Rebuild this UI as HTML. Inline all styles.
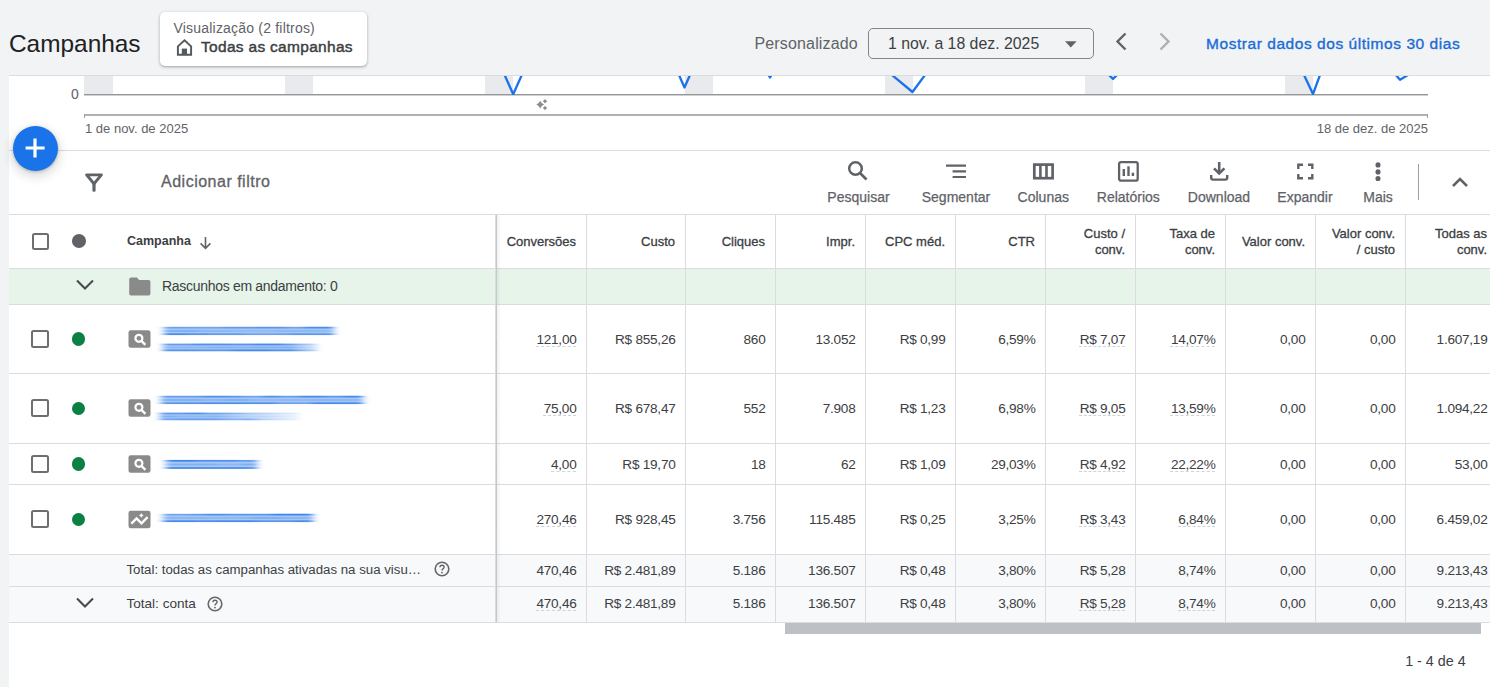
<!DOCTYPE html>
<html><head><meta charset="utf-8"><style>
html,body{margin:0;padding:0}
body{width:1490px;height:687px;overflow:hidden;position:relative;background:#f1f3f4;font-family:"Liberation Sans", sans-serif}
.t{position:absolute;white-space:nowrap;line-height:1}
.b{position:absolute;box-sizing:content-box}
svg.b{overflow:visible}
</style></head><body>
<div class="t" style="left:9.00px;top:31.75px;font-size:24.4px;color:#202124;font-weight:400;">Campanhas</div>
<div class="b" style="left:160px;top:12px;width:207px;height:54px;background:#fff;border-radius:5px;box-shadow:0 1px 2px rgba(60,64,67,.3),0 1px 3px 1px rgba(60,64,67,.12)"></div>
<div class="t" style="left:173.50px;top:20.95px;font-size:14px;color:#5f6368;font-weight:400;letter-spacing:.2px">Visualização (2 filtros)</div>
<svg class="b" style="left:172px;top:36px" width="24" height="24" viewBox="0 0 24 24"><path d="M5.9 10.4 L12.5 4.3 L19.1 10.4 V18.8 H5.9 Z" fill="none" stroke="#55595e" stroke-width="1.95" stroke-linejoin="miter"/><rect x="9.8" y="12.6" width="5.2" height="6.5" fill="#55595e"/></svg>
<div class="t" style="left:201.00px;top:39.28px;font-size:15.5px;color:#3c4043;font-weight:400;letter-spacing:.3px;-webkit-text-stroke:.45px #3c4043">Todas as campanhas</div>
<div class="t" style="left:754.50px;top:35.96px;font-size:16px;color:#5f6368;font-weight:400;letter-spacing:.15px">Personalizado</div>
<div class="b" style="left:868px;top:28px;width:224px;height:29px;border:1px solid #80868b;border-radius:5px"></div>
<div class="t" style="left:888.00px;top:36.08px;font-size:15.85px;color:#3c4043;font-weight:400;">1 nov. a 18 dez. 2025</div>
<svg class="b" style="left:1065px;top:41px" width="12" height="7" viewBox="0 0 12 7"><path d="M0 0.2 H11.6 L5.8 6.5 Z" fill="#5f6368"/></svg>
<svg class="b" style="left:1114px;top:32px" width="14" height="19" viewBox="0 0 14 19"><path d="M11.5 1.5 L3.5 9.5 L11.5 17.5" fill="none" stroke="#5f6368" stroke-width="2.4"/></svg>
<svg class="b" style="left:1158px;top:32px" width="14" height="19" viewBox="0 0 14 19"><path d="M2.5 1.5 L10.5 9.5 L2.5 17.5" fill="none" stroke="#acb0b5" stroke-width="2.4"/></svg>
<div class="t" style="left:1206.00px;top:36.08px;font-size:15.5px;color:#1a6bd6;font-weight:400;letter-spacing:.55px;-webkit-text-stroke:.35px #1a6bd6">Mostrar dados dos últimos 30 dias</div>
<div class="b" style="left:9px;top:75px;width:1481px;height:612px;background:#fff;border-top:1px solid #dadce0"></div>
<div class="b" style="left:84px;top:76px;width:29px;height:18px;background:#e8eaed"></div>
<div class="b" style="left:285px;top:76px;width:28px;height:18px;background:#e8eaed"></div>
<div class="b" style="left:485px;top:76px;width:28px;height:18px;background:#e8eaed"></div>
<div class="b" style="left:685px;top:76px;width:28px;height:18px;background:#e8eaed"></div>
<div class="b" style="left:885px;top:76px;width:28px;height:18px;background:#e8eaed"></div>
<div class="b" style="left:1085px;top:76px;width:28px;height:18px;background:#e8eaed"></div>
<div class="b" style="left:1285px;top:76px;width:28px;height:18px;background:#e8eaed"></div>
<div class="b" style="left:84px;top:94px;width:1344px;height:1px;background:#95979a"></div>
<div class="b" style="left:84px;top:95px;width:1344px;height:1px;background:#cfd0d2"></div>
<div class="t" style="right:1411.20px;top:87.15px;font-size:14px;color:#5f6368;font-weight:400;">0</div>
<div class="b" style="left:84px;top:114px;width:1344px;height:2px;background:#b0b2b4"></div>
<div class="b" style="left:84px;top:114px;width:1px;height:4px;background:#a0a2a5"></div>
<div class="b" style="left:1427px;top:114px;width:1px;height:4px;background:#a0a2a5"></div>
<div class="t" style="left:85.00px;top:122.30px;font-size:13px;color:#5f6368;font-weight:400;">1 de nov. de 2025</div>
<div class="t" style="right:62.00px;top:122.30px;font-size:13px;color:#5f6368;font-weight:400;">18 de dez. de 2025</div>
<svg class="b" style="left:9px;top:75px;clip-path:inset(1px 0 0 0)" width="1481" height="20"><polyline points="495.6,0 504.20000000000005,19.299999999999997 512.8,0" fill="none" stroke="#1a73e8" stroke-width="2.3" stroke-linejoin="round"/><polyline points="670,0 675.5,12.5 681,0" fill="none" stroke="#1a73e8" stroke-width="2.3" stroke-linejoin="round"/><polyline points="759.5,0 761,2.5 762.5,0" fill="none" stroke="#1a73e8" stroke-width="2.3" stroke-linejoin="round"/><polyline points="883,0 903.5,17 916,0" fill="none" stroke="#1a73e8" stroke-width="2.3" stroke-linejoin="round"/><polyline points="1100,0 1104,4 1108,0" fill="none" stroke="#1a73e8" stroke-width="2.3" stroke-linejoin="round"/><polyline points="1295,0 1304,19 1311,0" fill="none" stroke="#1a73e8" stroke-width="2.3" stroke-linejoin="round"/><polyline points="1386.8,0 1391,4.799999999999997 1399,0" fill="none" stroke="#1a73e8" stroke-width="2.3" stroke-linejoin="round"/></svg>
<svg class="b" style="left:530px;top:94px" width="24" height="20" viewBox="0 0 24 20"><path d="M10.2 6.699999999999999 Q11.37 9.43 14.1 10.6 Q11.37 11.77 10.2 14.5 Q9.03 11.77 6.299999999999999 10.6 Q9.03 9.43 10.2 6.699999999999999 Z M15 5.0 Q15.805 6.495 17.3 7.3 Q15.805 8.105 15 9.6 Q14.195 8.105 12.7 7.3 Q14.195 6.495 15 5.0 Z M15 11.7 Q15.805 13.195 17.3 14 Q15.805 14.805 15 16.3 Q14.195 14.805 12.7 14 Q14.195 13.195 15 11.7 Z" fill="#8a8c8f"/></svg>
<div class="b" style="left:9px;top:150px;width:1481px;height:1px;background:#dadce0"></div>
<svg class="b" style="left:84px;top:172px" width="20" height="21" viewBox="0 0 20 21"><path d="M2.6 2.9 H17.4 L10 11.8 Z" fill="none" stroke="#5f6368" stroke-width="2.9" stroke-linejoin="round"/><rect x="8.4" y="10.5" width="3.2" height="9.3" rx="1.4" fill="#5f6368"/></svg>
<div class="t" style="left:161.00px;top:173.76px;font-size:16px;color:#5f6368;font-weight:400;letter-spacing:.5px;-webkit-text-stroke:.3px #5f6368">Adicionar filtro</div>
<div class="t" style="left:658.50px;width:400px;text-align:center;top:189.85px;font-size:14px;color:#5f6368;font-weight:400;-webkit-text-stroke:.25px #5f6368">Pesquisar</div>
<div class="t" style="left:756.00px;width:400px;text-align:center;top:189.85px;font-size:14px;color:#5f6368;font-weight:400;-webkit-text-stroke:.25px #5f6368">Segmentar</div>
<div class="t" style="left:843.30px;width:400px;text-align:center;top:189.85px;font-size:14px;color:#5f6368;font-weight:400;-webkit-text-stroke:.25px #5f6368">Colunas</div>
<div class="t" style="left:928.30px;width:400px;text-align:center;top:189.85px;font-size:14px;color:#5f6368;font-weight:400;-webkit-text-stroke:.25px #5f6368">Relatórios</div>
<div class="t" style="left:1019.00px;width:400px;text-align:center;top:189.85px;font-size:14px;color:#5f6368;font-weight:400;-webkit-text-stroke:.25px #5f6368">Download</div>
<div class="t" style="left:1105.00px;width:400px;text-align:center;top:189.85px;font-size:14px;color:#5f6368;font-weight:400;-webkit-text-stroke:.25px #5f6368">Expandir</div>
<div class="t" style="left:1178.00px;width:400px;text-align:center;top:189.85px;font-size:14px;color:#5f6368;font-weight:400;-webkit-text-stroke:.25px #5f6368">Mais</div>
<svg class="b" style="left:845px;top:158px" width="25" height="25" viewBox="0 0 25 25"><circle cx="10.5" cy="10.5" r="6.3" fill="none" stroke="#5f6368" stroke-width="2.5"/><path d="M15 15 L21.5 21.5" stroke="#5f6368" stroke-width="2.6"/></svg>
<svg class="b" style="left:944px;top:163px" width="24" height="16" viewBox="0 0 24 16"><path d="M2 2.7 H22 M8.6 8.4 H22 M8.6 14 H22" stroke="#5f6368" stroke-width="2.2"/></svg>
<svg class="b" style="left:1031px;top:161px" width="25" height="21" viewBox="0 0 25 21"><rect x="3.3" y="3.6" width="18.3" height="13.6" fill="none" stroke="#5f6368" stroke-width="2.7"/><path d="M9.4 3 V17.6 M15.5 3 V17.6" stroke="#5f6368" stroke-width="2.6"/></svg>
<svg class="b" style="left:1116px;top:159px" width="25" height="25" viewBox="0 0 25 25"><rect x="3.1" y="3.1" width="18.6" height="18.6" rx="2" fill="none" stroke="#5f6368" stroke-width="2.3"/><rect x="6.6" y="10" width="2.4" height="7" fill="#5f6368"/><rect x="11.3" y="7.3" width="2.4" height="9.7" fill="#5f6368"/><rect x="15.7" y="13.7" width="2.4" height="3.3" fill="#5f6368"/></svg>
<svg class="b" style="left:1207px;top:159px" width="25" height="25" viewBox="0 0 25 25"><path d="M12.2 3 V14" stroke="#5f6368" stroke-width="2.6"/><path d="M7 9.3 L12.2 14.5 L17.4 9.3" fill="none" stroke="#5f6368" stroke-width="2.6"/><path d="M4.2 16 V18.8 Q4.2 20.6 6 20.6 H18.4 Q20.2 20.6 20.2 18.8 V16" fill="none" stroke="#5f6368" stroke-width="2.4"/></svg>
<svg class="b" style="left:1295px;top:161px" width="21" height="21" viewBox="0 0 21 21"><path d="M3.3 8 V3.8 H8 M13 3.8 H17.3 V8 M17.3 13 V17.3 H13 M8 17.3 H3.3 V13" fill="none" stroke="#5f6368" stroke-width="2.4"/></svg>
<svg class="b" style="left:1372px;top:160px" width="12" height="24" viewBox="0 0 12 24"><circle cx="6" cy="4.9" r="2.55" fill="#5f6368"/><circle cx="6" cy="11.9" r="2.55" fill="#5f6368"/><circle cx="6" cy="18.5" r="2.55" fill="#5f6368"/></svg>
<div class="b" style="left:1418px;top:164px;width:1px;height:36px;background:#9aa0a6"></div>
<svg class="b" style="left:1450px;top:176px" width="20" height="14" viewBox="0 0 20 14"><path d="M3 10 L10 3 L17 10" fill="none" stroke="#5f6368" stroke-width="2.5"/></svg>
<div class="b" style="left:9px;top:214px;width:1481px;height:1px;background:#dadce0"></div>
<div class="b" style="left:9px;top:269px;width:1481px;height:35px;background:#e6f4ea"></div>
<div class="b" style="left:9px;top:555px;width:1481px;height:67px;background:#f8f9fa"></div>
<div class="b" style="left:9px;top:268px;width:1481px;height:1px;background:#dadce0"></div>
<div class="b" style="left:9px;top:304px;width:1481px;height:1px;background:#dadce0"></div>
<div class="b" style="left:9px;top:373px;width:1481px;height:1px;background:#dadce0"></div>
<div class="b" style="left:9px;top:443px;width:1481px;height:1px;background:#dadce0"></div>
<div class="b" style="left:9px;top:484px;width:1481px;height:1px;background:#dadce0"></div>
<div class="b" style="left:9px;top:554px;width:1481px;height:1px;background:#dadce0"></div>
<div class="b" style="left:9px;top:586px;width:1481px;height:1px;background:#dadce0"></div>
<div class="b" style="left:9px;top:622px;width:1481px;height:1px;background:#dadce0"></div>
<div class="b" style="left:586px;top:215px;width:1px;height:407px;background:#dadce0"></div>
<div class="b" style="left:685px;top:215px;width:1px;height:407px;background:#dadce0"></div>
<div class="b" style="left:775px;top:215px;width:1px;height:407px;background:#dadce0"></div>
<div class="b" style="left:865px;top:215px;width:1px;height:407px;background:#dadce0"></div>
<div class="b" style="left:955px;top:215px;width:1px;height:407px;background:#dadce0"></div>
<div class="b" style="left:1045px;top:215px;width:1px;height:407px;background:#dadce0"></div>
<div class="b" style="left:1135px;top:215px;width:1px;height:407px;background:#dadce0"></div>
<div class="b" style="left:1225px;top:215px;width:1px;height:407px;background:#dadce0"></div>
<div class="b" style="left:1315px;top:215px;width:1px;height:407px;background:#dadce0"></div>
<div class="b" style="left:1405px;top:215px;width:1px;height:407px;background:#dadce0"></div>
<div class="b" style="left:495px;top:215px;width:1px;height:407px;background:#dadce0"></div>
<div class="b" style="left:496px;top:215px;width:1px;height:407px;background:#c4c7cb"></div>
<div class="b" style="left:495.5px;top:340.5px;width:1px;height:8px;background:#c9bfc3"></div>
<div class="b" style="left:495.5px;top:410px;width:1px;height:8px;background:#c9bfc3"></div>
<div class="b" style="left:495.5px;top:461.5px;width:1px;height:8px;background:#c9bfc3"></div>
<div class="b" style="left:495.5px;top:519px;width:1px;height:8px;background:#c9bfc3"></div>
<div class="b" style="left:497px;top:215px;width:4px;height:407px;background:linear-gradient(90deg,rgba(60,64,67,.07),rgba(60,64,67,0))"></div>
<div class="t" style="right:914.00px;top:235.00px;font-size:13px;color:#3c4043;font-weight:400;-webkit-text-stroke:.3px #3c4043">Conversões</div>
<div class="t" style="right:815.00px;top:235.00px;font-size:13px;color:#3c4043;font-weight:400;-webkit-text-stroke:.3px #3c4043">Custo</div>
<div class="t" style="right:725.00px;top:235.00px;font-size:13px;color:#3c4043;font-weight:400;-webkit-text-stroke:.3px #3c4043">Cliques</div>
<div class="t" style="right:635.00px;top:235.00px;font-size:13px;color:#3c4043;font-weight:400;-webkit-text-stroke:.3px #3c4043">Impr.</div>
<div class="t" style="right:545.00px;top:235.00px;font-size:13px;color:#3c4043;font-weight:400;-webkit-text-stroke:.3px #3c4043">CPC méd.</div>
<div class="t" style="right:455.00px;top:235.00px;font-size:13px;color:#3c4043;font-weight:400;-webkit-text-stroke:.3px #3c4043">CTR</div>
<div class="t" style="right:365.00px;top:227.20px;font-size:13px;color:#3c4043;font-weight:400;-webkit-text-stroke:.3px #3c4043">Custo /</div>
<div class="t" style="right:365.00px;top:242.80px;font-size:13px;color:#3c4043;font-weight:400;-webkit-text-stroke:.3px #3c4043">conv.</div>
<div class="t" style="right:275.00px;top:227.20px;font-size:13px;color:#3c4043;font-weight:400;-webkit-text-stroke:.3px #3c4043">Taxa de</div>
<div class="t" style="right:275.00px;top:242.80px;font-size:13px;color:#3c4043;font-weight:400;-webkit-text-stroke:.3px #3c4043">conv.</div>
<div class="t" style="right:185.00px;top:235.00px;font-size:13px;color:#3c4043;font-weight:400;-webkit-text-stroke:.3px #3c4043">Valor conv.</div>
<div class="t" style="right:95.00px;top:227.20px;font-size:13px;color:#3c4043;font-weight:400;-webkit-text-stroke:.3px #3c4043">Valor conv.</div>
<div class="t" style="right:95.00px;top:242.80px;font-size:13px;color:#3c4043;font-weight:400;-webkit-text-stroke:.3px #3c4043">/ custo</div>
<div class="t" style="right:3.00px;top:227.20px;font-size:13px;color:#3c4043;font-weight:400;-webkit-text-stroke:.3px #3c4043">Todas as</div>
<div class="t" style="right:3.00px;top:242.80px;font-size:13px;color:#3c4043;font-weight:400;-webkit-text-stroke:.3px #3c4043">conv.</div>
<div class="b" style="left:32px;top:233px;width:13px;height:13px;border:2px solid #6d6e70;border-radius:2.5px"></div>
<div class="b" style="left:72px;top:234.3px;width:14px;height:13.4px;background:#5f6368;border-radius:50%"></div>
<div class="t" style="left:127.00px;top:235.42px;font-size:12.5px;color:#3c4043;font-weight:700;">Campanha</div>
<svg class="b" style="left:198px;top:236px" width="15" height="14" viewBox="0 0 15 14"><path d="M7.5 1 V12.2 M2.6 7.4 L7.5 12.3 L12.4 7.4" fill="none" stroke="#5f6368" stroke-width="1.6"/></svg>
<svg class="b" style="left:74px;top:277px" width="22" height="16" viewBox="0 0 22 16"><path d="M3 3.5 L11 11.5 L19 3.5" fill="none" stroke="#474b50" stroke-width="2.1"/></svg>
<svg class="b" style="left:128px;top:277px" width="23" height="19" viewBox="0 0 23 19"><path d="M1.2 2.6 Q1.2 0.6 3 0.6 H9 L11 3 H20.6 Q22.4 3 22.4 4.8 V16.8 Q22.4 18.6 20.6 18.6 H3 Q1.2 18.6 1.2 16.8 Z" fill="#8a8a8a"/></svg>
<div class="t" style="left:162.00px;top:279.35px;font-size:14px;color:#3c4043;font-weight:400;letter-spacing:-.3px">Rascunhos em andamento: 0</div>
<div class="t" style="right:913.50px;top:333.09px;font-size:13.6px;color:#3c4043;font-weight:400;letter-spacing:-.25px;text-decoration:underline dashed #d0d3d7;text-decoration-thickness:1px;text-underline-offset:1.8px">121,00</div>
<div class="t" style="right:814.50px;top:333.09px;font-size:13.6px;color:#3c4043;font-weight:400;letter-spacing:-.25px;">R$ 855,26</div>
<div class="t" style="right:724.50px;top:333.09px;font-size:13.6px;color:#3c4043;font-weight:400;letter-spacing:-.25px;">860</div>
<div class="t" style="right:634.50px;top:333.09px;font-size:13.6px;color:#3c4043;font-weight:400;letter-spacing:-.25px;">13.052</div>
<div class="t" style="right:544.50px;top:333.09px;font-size:13.6px;color:#3c4043;font-weight:400;letter-spacing:-.25px;">R$ 0,99</div>
<div class="t" style="right:454.50px;top:333.09px;font-size:13.6px;color:#3c4043;font-weight:400;letter-spacing:-.25px;">6,59%</div>
<div class="t" style="right:364.50px;top:333.09px;font-size:13.6px;color:#3c4043;font-weight:400;letter-spacing:-.25px;text-decoration:underline dashed #d0d3d7;text-decoration-thickness:1px;text-underline-offset:1.8px">R$ 7,07</div>
<div class="t" style="right:274.50px;top:333.09px;font-size:13.6px;color:#3c4043;font-weight:400;letter-spacing:-.25px;text-decoration:underline dashed #d0d3d7;text-decoration-thickness:1px;text-underline-offset:1.8px">14,07%</div>
<div class="t" style="right:184.50px;top:333.09px;font-size:13.6px;color:#3c4043;font-weight:400;letter-spacing:-.25px;">0,00</div>
<div class="t" style="right:94.50px;top:333.09px;font-size:13.6px;color:#3c4043;font-weight:400;letter-spacing:-.25px;">0,00</div>
<div class="t" style="right:2.50px;top:333.09px;font-size:13.6px;color:#3c4043;font-weight:400;letter-spacing:-.25px;">1.607,19</div>
<div class="t" style="right:913.50px;top:402.39px;font-size:13.6px;color:#3c4043;font-weight:400;letter-spacing:-.25px;text-decoration:underline dashed #d0d3d7;text-decoration-thickness:1px;text-underline-offset:1.8px">75,00</div>
<div class="t" style="right:814.50px;top:402.39px;font-size:13.6px;color:#3c4043;font-weight:400;letter-spacing:-.25px;">R$ 678,47</div>
<div class="t" style="right:724.50px;top:402.39px;font-size:13.6px;color:#3c4043;font-weight:400;letter-spacing:-.25px;">552</div>
<div class="t" style="right:634.50px;top:402.39px;font-size:13.6px;color:#3c4043;font-weight:400;letter-spacing:-.25px;">7.908</div>
<div class="t" style="right:544.50px;top:402.39px;font-size:13.6px;color:#3c4043;font-weight:400;letter-spacing:-.25px;">R$ 1,23</div>
<div class="t" style="right:454.50px;top:402.39px;font-size:13.6px;color:#3c4043;font-weight:400;letter-spacing:-.25px;">6,98%</div>
<div class="t" style="right:364.50px;top:402.39px;font-size:13.6px;color:#3c4043;font-weight:400;letter-spacing:-.25px;text-decoration:underline dashed #d0d3d7;text-decoration-thickness:1px;text-underline-offset:1.8px">R$ 9,05</div>
<div class="t" style="right:274.50px;top:402.39px;font-size:13.6px;color:#3c4043;font-weight:400;letter-spacing:-.25px;text-decoration:underline dashed #d0d3d7;text-decoration-thickness:1px;text-underline-offset:1.8px">13,59%</div>
<div class="t" style="right:184.50px;top:402.39px;font-size:13.6px;color:#3c4043;font-weight:400;letter-spacing:-.25px;">0,00</div>
<div class="t" style="right:94.50px;top:402.39px;font-size:13.6px;color:#3c4043;font-weight:400;letter-spacing:-.25px;">0,00</div>
<div class="t" style="right:2.50px;top:402.39px;font-size:13.6px;color:#3c4043;font-weight:400;letter-spacing:-.25px;">1.094,22</div>
<div class="t" style="right:913.50px;top:458.19px;font-size:13.6px;color:#3c4043;font-weight:400;letter-spacing:-.25px;text-decoration:underline dashed #d0d3d7;text-decoration-thickness:1px;text-underline-offset:1.8px">4,00</div>
<div class="t" style="right:814.50px;top:458.19px;font-size:13.6px;color:#3c4043;font-weight:400;letter-spacing:-.25px;">R$ 19,70</div>
<div class="t" style="right:724.50px;top:458.19px;font-size:13.6px;color:#3c4043;font-weight:400;letter-spacing:-.25px;">18</div>
<div class="t" style="right:634.50px;top:458.19px;font-size:13.6px;color:#3c4043;font-weight:400;letter-spacing:-.25px;">62</div>
<div class="t" style="right:544.50px;top:458.19px;font-size:13.6px;color:#3c4043;font-weight:400;letter-spacing:-.25px;">R$ 1,09</div>
<div class="t" style="right:454.50px;top:458.19px;font-size:13.6px;color:#3c4043;font-weight:400;letter-spacing:-.25px;">29,03%</div>
<div class="t" style="right:364.50px;top:458.19px;font-size:13.6px;color:#3c4043;font-weight:400;letter-spacing:-.25px;text-decoration:underline dashed #d0d3d7;text-decoration-thickness:1px;text-underline-offset:1.8px">R$ 4,92</div>
<div class="t" style="right:274.50px;top:458.19px;font-size:13.6px;color:#3c4043;font-weight:400;letter-spacing:-.25px;text-decoration:underline dashed #d0d3d7;text-decoration-thickness:1px;text-underline-offset:1.8px">22,22%</div>
<div class="t" style="right:184.50px;top:458.19px;font-size:13.6px;color:#3c4043;font-weight:400;letter-spacing:-.25px;">0,00</div>
<div class="t" style="right:94.50px;top:458.19px;font-size:13.6px;color:#3c4043;font-weight:400;letter-spacing:-.25px;">0,00</div>
<div class="t" style="right:2.50px;top:458.19px;font-size:13.6px;color:#3c4043;font-weight:400;letter-spacing:-.25px;">53,00</div>
<div class="t" style="right:913.50px;top:513.39px;font-size:13.6px;color:#3c4043;font-weight:400;letter-spacing:-.25px;text-decoration:underline dashed #d0d3d7;text-decoration-thickness:1px;text-underline-offset:1.8px">270,46</div>
<div class="t" style="right:814.50px;top:513.39px;font-size:13.6px;color:#3c4043;font-weight:400;letter-spacing:-.25px;">R$ 928,45</div>
<div class="t" style="right:724.50px;top:513.39px;font-size:13.6px;color:#3c4043;font-weight:400;letter-spacing:-.25px;">3.756</div>
<div class="t" style="right:634.50px;top:513.39px;font-size:13.6px;color:#3c4043;font-weight:400;letter-spacing:-.25px;">115.485</div>
<div class="t" style="right:544.50px;top:513.39px;font-size:13.6px;color:#3c4043;font-weight:400;letter-spacing:-.25px;">R$ 0,25</div>
<div class="t" style="right:454.50px;top:513.39px;font-size:13.6px;color:#3c4043;font-weight:400;letter-spacing:-.25px;">3,25%</div>
<div class="t" style="right:364.50px;top:513.39px;font-size:13.6px;color:#3c4043;font-weight:400;letter-spacing:-.25px;text-decoration:underline dashed #d0d3d7;text-decoration-thickness:1px;text-underline-offset:1.8px">R$ 3,43</div>
<div class="t" style="right:274.50px;top:513.39px;font-size:13.6px;color:#3c4043;font-weight:400;letter-spacing:-.25px;text-decoration:underline dashed #d0d3d7;text-decoration-thickness:1px;text-underline-offset:1.8px">6,84%</div>
<div class="t" style="right:184.50px;top:513.39px;font-size:13.6px;color:#3c4043;font-weight:400;letter-spacing:-.25px;">0,00</div>
<div class="t" style="right:94.50px;top:513.39px;font-size:13.6px;color:#3c4043;font-weight:400;letter-spacing:-.25px;">0,00</div>
<div class="t" style="right:2.50px;top:513.39px;font-size:13.6px;color:#3c4043;font-weight:400;letter-spacing:-.25px;">6.459,02</div>
<div class="t" style="right:913.50px;top:563.59px;font-size:13.6px;color:#3c4043;font-weight:400;letter-spacing:-.25px;">470,46</div>
<div class="t" style="right:814.50px;top:563.59px;font-size:13.6px;color:#3c4043;font-weight:400;letter-spacing:-.25px;">R$ 2.481,89</div>
<div class="t" style="right:724.50px;top:563.59px;font-size:13.6px;color:#3c4043;font-weight:400;letter-spacing:-.25px;">5.186</div>
<div class="t" style="right:634.50px;top:563.59px;font-size:13.6px;color:#3c4043;font-weight:400;letter-spacing:-.25px;">136.507</div>
<div class="t" style="right:544.50px;top:563.59px;font-size:13.6px;color:#3c4043;font-weight:400;letter-spacing:-.25px;">R$ 0,48</div>
<div class="t" style="right:454.50px;top:563.59px;font-size:13.6px;color:#3c4043;font-weight:400;letter-spacing:-.25px;">3,80%</div>
<div class="t" style="right:364.50px;top:563.59px;font-size:13.6px;color:#3c4043;font-weight:400;letter-spacing:-.25px;">R$ 5,28</div>
<div class="t" style="right:274.50px;top:563.59px;font-size:13.6px;color:#3c4043;font-weight:400;letter-spacing:-.25px;">8,74%</div>
<div class="t" style="right:184.50px;top:563.59px;font-size:13.6px;color:#3c4043;font-weight:400;letter-spacing:-.25px;">0,00</div>
<div class="t" style="right:94.50px;top:563.59px;font-size:13.6px;color:#3c4043;font-weight:400;letter-spacing:-.25px;">0,00</div>
<div class="t" style="right:2.50px;top:563.59px;font-size:13.6px;color:#3c4043;font-weight:400;letter-spacing:-.25px;">9.213,43</div>
<div class="t" style="right:913.50px;top:597.39px;font-size:13.6px;color:#3c4043;font-weight:400;letter-spacing:-.25px;text-decoration:underline dashed #d0d3d7;text-decoration-thickness:1px;text-underline-offset:1.8px">470,46</div>
<div class="t" style="right:814.50px;top:597.39px;font-size:13.6px;color:#3c4043;font-weight:400;letter-spacing:-.25px;">R$ 2.481,89</div>
<div class="t" style="right:724.50px;top:597.39px;font-size:13.6px;color:#3c4043;font-weight:400;letter-spacing:-.25px;">5.186</div>
<div class="t" style="right:634.50px;top:597.39px;font-size:13.6px;color:#3c4043;font-weight:400;letter-spacing:-.25px;">136.507</div>
<div class="t" style="right:544.50px;top:597.39px;font-size:13.6px;color:#3c4043;font-weight:400;letter-spacing:-.25px;">R$ 0,48</div>
<div class="t" style="right:454.50px;top:597.39px;font-size:13.6px;color:#3c4043;font-weight:400;letter-spacing:-.25px;">3,80%</div>
<div class="t" style="right:364.50px;top:597.39px;font-size:13.6px;color:#3c4043;font-weight:400;letter-spacing:-.25px;text-decoration:underline dashed #d0d3d7;text-decoration-thickness:1px;text-underline-offset:1.8px">R$ 5,28</div>
<div class="t" style="right:274.50px;top:597.39px;font-size:13.6px;color:#3c4043;font-weight:400;letter-spacing:-.25px;text-decoration:underline dashed #d0d3d7;text-decoration-thickness:1px;text-underline-offset:1.8px">8,74%</div>
<div class="t" style="right:184.50px;top:597.39px;font-size:13.6px;color:#3c4043;font-weight:400;letter-spacing:-.25px;">0,00</div>
<div class="t" style="right:94.50px;top:597.39px;font-size:13.6px;color:#3c4043;font-weight:400;letter-spacing:-.25px;">0,00</div>
<div class="t" style="right:2.50px;top:597.39px;font-size:13.6px;color:#3c4043;font-weight:400;letter-spacing:-.25px;">9.213,43</div>
<div class="b" style="left:31px;top:329.5px;width:14px;height:14px;border:2px solid #6d6e70;border-radius:2.5px"></div>
<div class="b" style="left:71.8px;top:332.2px;width:13.4px;height:13.6px;background:#0b8043;border-radius:50%"></div>
<svg class="b" style="left:128px;top:329.5px" width="23" height="18" viewBox="0 0 23 18"><rect x="0.5" y="0.2" width="22" height="17.5" rx="2.2" fill="#8a8a8a"/><circle cx="10.9" cy="8.3" r="3.5" fill="none" stroke="#fff" stroke-width="2.2"/><path d="M13.4 10.8 L17.4 14.8" stroke="#fff" stroke-width="2.4"/></svg>
<div class="b" style="left:31px;top:399.0px;width:14px;height:14px;border:2px solid #6d6e70;border-radius:2.5px"></div>
<div class="b" style="left:71.8px;top:401.7px;width:13.4px;height:13.6px;background:#0b8043;border-radius:50%"></div>
<svg class="b" style="left:128px;top:399px" width="23" height="18" viewBox="0 0 23 18"><rect x="0.5" y="0.2" width="22" height="17.5" rx="2.2" fill="#8a8a8a"/><circle cx="10.9" cy="8.3" r="3.5" fill="none" stroke="#fff" stroke-width="2.2"/><path d="M13.4 10.8 L17.4 14.8" stroke="#fff" stroke-width="2.4"/></svg>
<div class="b" style="left:31px;top:454.5px;width:14px;height:14px;border:2px solid #6d6e70;border-radius:2.5px"></div>
<div class="b" style="left:71.8px;top:457.2px;width:13.4px;height:13.6px;background:#0b8043;border-radius:50%"></div>
<svg class="b" style="left:128px;top:454.5px" width="23" height="18" viewBox="0 0 23 18"><rect x="0.5" y="0.2" width="22" height="17.5" rx="2.2" fill="#8a8a8a"/><circle cx="10.9" cy="8.3" r="3.5" fill="none" stroke="#fff" stroke-width="2.2"/><path d="M13.4 10.8 L17.4 14.8" stroke="#fff" stroke-width="2.4"/></svg>
<div class="b" style="left:31px;top:510.0px;width:14px;height:14px;border:2px solid #6d6e70;border-radius:2.5px"></div>
<div class="b" style="left:71.8px;top:512.7px;width:13.4px;height:13.6px;background:#0b8043;border-radius:50%"></div>
<svg class="b" style="left:128px;top:510px" width="23" height="18" viewBox="0 0 23 18"><rect x="0.5" y="0.7" width="22" height="17.5" rx="2.2" fill="#8a8a8a"/><path d="M3.3 13.7 L8.6 8.5 L13.5 13.3 L19.6 7.2" fill="none" stroke="#fff" stroke-width="2.4"/><path d="M13.3 2.9 L14.1 4.6 L15.8 5.4 L14.1 6.2 L13.3 7.9 L12.5 6.2 L10.8 5.4 L12.5 4.6 Z" fill="#fff"/></svg>
<svg class="b" style="left:152px;top:322px" width="194" height="18" viewBox="0 0 194 18"><defs><filter id="bl164326" x="-20%" y="-50%" width="140%" height="200%"><feGaussianBlur stdDeviation="3.5 0.7"/></filter></defs><g filter="url(#bl164326)"><rect x="12" y="5.0" width="170" height="8.0" fill="#9dc0f4" opacity=".9"/><rect x="12.0" y="4.7" width="24.7" height="1.8" fill="#1a73e8" opacity="0.43"/><rect x="36.7" y="4.7" width="34.5" height="1.8" fill="#1a73e8" opacity="0.40"/><rect x="71.2" y="4.7" width="31.1" height="1.8" fill="#1a73e8" opacity="0.51"/><rect x="102.3" y="4.7" width="16.7" height="1.8" fill="#1a73e8" opacity="0.57"/><rect x="119.1" y="4.7" width="16.1" height="1.8" fill="#1a73e8" opacity="0.54"/><rect x="135.2" y="4.7" width="17.1" height="1.8" fill="#1a73e8" opacity="0.41"/><rect x="152.3" y="4.7" width="27.7" height="1.8" fill="#1a73e8" opacity="0.69"/><rect x="180.0" y="4.7" width="2.0" height="1.8" fill="#1a73e8" opacity="0.46"/><rect x="12.0" y="8.1" width="33.8" height="1.8" fill="#1a73e8" opacity="0.29"/><rect x="45.8" y="8.1" width="32.3" height="1.8" fill="#1a73e8" opacity="0.21"/><rect x="78.1" y="8.1" width="44.3" height="1.8" fill="#1a73e8" opacity="0.16"/><rect x="122.4" y="8.1" width="40.8" height="1.8" fill="#1a73e8" opacity="0.19"/><rect x="163.2" y="8.1" width="18.8" height="1.8" fill="#1a73e8" opacity="0.17"/><rect x="12.0" y="11.3" width="24.3" height="1.8" fill="#1a73e8" opacity="0.68"/><rect x="36.3" y="11.3" width="20.4" height="1.8" fill="#1a73e8" opacity="0.59"/><rect x="56.7" y="11.3" width="34.2" height="1.8" fill="#1a73e8" opacity="0.51"/><rect x="90.8" y="11.3" width="31.4" height="1.8" fill="#1a73e8" opacity="0.40"/><rect x="122.3" y="11.3" width="16.8" height="1.8" fill="#1a73e8" opacity="0.45"/><rect x="139.1" y="11.3" width="35.4" height="1.8" fill="#1a73e8" opacity="0.54"/><rect x="174.5" y="11.3" width="7.5" height="1.8" fill="#1a73e8" opacity="0.59"/></g></svg>
<svg class="b" style="left:151px;top:339px" width="179" height="17" viewBox="0 0 179 17"><defs><filter id="bl163343" x="-20%" y="-50%" width="140%" height="200%"><feGaussianBlur stdDeviation="3.5 0.7"/></filter><linearGradient id="gbl163343" x1="0" x2="179" gradientUnits="userSpaceOnUse"><stop offset="0.777" stop-color="#fff"/><stop offset="1" stop-color="#000"/></linearGradient><mask id="mbl163343"><rect width="179" height="17" fill="url(#gbl163343)"/></mask></defs><g filter="url(#bl163343)" mask="url(#mbl163343)"><rect x="12" y="4.9" width="155" height="7.2" fill="#9dc0f4" opacity=".9"/><rect x="12.0" y="4.5" width="28.6" height="1.8" fill="#1a73e8" opacity="0.49"/><rect x="40.6" y="4.5" width="38.8" height="1.8" fill="#1a73e8" opacity="0.64"/><rect x="79.4" y="4.5" width="22.3" height="1.8" fill="#1a73e8" opacity="0.59"/><rect x="101.7" y="4.5" width="30.8" height="1.8" fill="#1a73e8" opacity="0.70"/><rect x="132.5" y="4.5" width="34.5" height="1.8" fill="#1a73e8" opacity="0.48"/><rect x="12.0" y="7.6" width="44.4" height="1.8" fill="#1a73e8" opacity="0.17"/><rect x="56.4" y="7.6" width="27.5" height="1.8" fill="#1a73e8" opacity="0.26"/><rect x="83.9" y="7.6" width="19.6" height="1.8" fill="#1a73e8" opacity="0.22"/><rect x="103.5" y="7.6" width="16.2" height="1.8" fill="#1a73e8" opacity="0.25"/><rect x="119.7" y="7.6" width="37.9" height="1.8" fill="#1a73e8" opacity="0.24"/><rect x="157.6" y="7.6" width="9.4" height="1.8" fill="#1a73e8" opacity="0.20"/><rect x="12.0" y="10.5" width="35.9" height="1.8" fill="#1a73e8" opacity="0.60"/><rect x="47.9" y="10.5" width="32.4" height="1.8" fill="#1a73e8" opacity="0.55"/><rect x="80.3" y="10.5" width="40.2" height="1.8" fill="#1a73e8" opacity="0.73"/><rect x="120.5" y="10.5" width="29.2" height="1.8" fill="#1a73e8" opacity="0.62"/><rect x="149.7" y="10.5" width="16.8" height="1.8" fill="#1a73e8" opacity="0.64"/><rect x="166.5" y="10.5" width="0.5" height="1.8" fill="#1a73e8" opacity="0.75"/></g></svg>
<svg class="b" style="left:149px;top:391px" width="226" height="18" viewBox="0 0 226 18"><defs><filter id="bl161395" x="-20%" y="-50%" width="140%" height="200%"><feGaussianBlur stdDeviation="3.5 0.7"/></filter></defs><g filter="url(#bl161395)"><rect x="12" y="5.0" width="202" height="8.0" fill="#9dc0f4" opacity=".9"/><rect x="12.0" y="4.7" width="39.7" height="1.8" fill="#1a73e8" opacity="0.48"/><rect x="51.7" y="4.7" width="26.6" height="1.8" fill="#1a73e8" opacity="0.63"/><rect x="78.2" y="4.7" width="15.7" height="1.8" fill="#1a73e8" opacity="0.55"/><rect x="93.9" y="4.7" width="20.0" height="1.8" fill="#1a73e8" opacity="0.42"/><rect x="113.9" y="4.7" width="16.8" height="1.8" fill="#1a73e8" opacity="0.66"/><rect x="130.7" y="4.7" width="18.9" height="1.8" fill="#1a73e8" opacity="0.47"/><rect x="149.6" y="4.7" width="26.7" height="1.8" fill="#1a73e8" opacity="0.70"/><rect x="176.3" y="4.7" width="17.4" height="1.8" fill="#1a73e8" opacity="0.54"/><rect x="193.7" y="4.7" width="20.3" height="1.8" fill="#1a73e8" opacity="0.71"/><rect x="12.0" y="8.1" width="39.6" height="1.8" fill="#1a73e8" opacity="0.28"/><rect x="51.6" y="8.1" width="23.4" height="1.8" fill="#1a73e8" opacity="0.21"/><rect x="74.9" y="8.1" width="25.8" height="1.8" fill="#1a73e8" opacity="0.28"/><rect x="100.7" y="8.1" width="43.7" height="1.8" fill="#1a73e8" opacity="0.17"/><rect x="144.4" y="8.1" width="20.3" height="1.8" fill="#1a73e8" opacity="0.18"/><rect x="164.7" y="8.1" width="22.0" height="1.8" fill="#1a73e8" opacity="0.22"/><rect x="186.7" y="8.1" width="27.3" height="1.8" fill="#1a73e8" opacity="0.19"/><rect x="12.0" y="11.3" width="15.1" height="1.8" fill="#1a73e8" opacity="0.53"/><rect x="27.1" y="11.3" width="26.1" height="1.8" fill="#1a73e8" opacity="0.59"/><rect x="53.2" y="11.3" width="43.6" height="1.8" fill="#1a73e8" opacity="0.63"/><rect x="96.8" y="11.3" width="30.5" height="1.8" fill="#1a73e8" opacity="0.61"/><rect x="127.3" y="11.3" width="35.3" height="1.8" fill="#1a73e8" opacity="0.40"/><rect x="162.5" y="11.3" width="42.0" height="1.8" fill="#1a73e8" opacity="0.67"/><rect x="204.5" y="11.3" width="9.5" height="1.8" fill="#1a73e8" opacity="0.67"/></g></svg>
<svg class="b" style="left:148px;top:408px" width="164" height="17" viewBox="0 0 164 17"><defs><filter id="bl160412" x="-20%" y="-50%" width="140%" height="200%"><feGaussianBlur stdDeviation="3.5 0.7"/></filter><linearGradient id="gbl160412" x1="0" x2="164" gradientUnits="userSpaceOnUse"><stop offset="0.409" stop-color="#fff"/><stop offset="1" stop-color="#000"/></linearGradient><mask id="mbl160412"><rect width="164" height="17" fill="url(#gbl160412)"/></mask></defs><g filter="url(#bl160412)" mask="url(#mbl160412)"><rect x="12" y="4.9" width="140" height="7.2" fill="#9dc0f4" opacity=".9"/><rect x="12.0" y="4.5" width="26.8" height="1.8" fill="#1a73e8" opacity="0.52"/><rect x="38.8" y="4.5" width="18.1" height="1.8" fill="#1a73e8" opacity="0.61"/><rect x="56.9" y="4.5" width="16.9" height="1.8" fill="#1a73e8" opacity="0.40"/><rect x="73.7" y="4.5" width="21.3" height="1.8" fill="#1a73e8" opacity="0.44"/><rect x="95.0" y="4.5" width="25.2" height="1.8" fill="#1a73e8" opacity="0.39"/><rect x="120.2" y="4.5" width="15.0" height="1.8" fill="#1a73e8" opacity="0.43"/><rect x="135.2" y="4.5" width="16.8" height="1.8" fill="#1a73e8" opacity="0.51"/><rect x="12.0" y="7.6" width="15.8" height="1.8" fill="#1a73e8" opacity="0.28"/><rect x="27.8" y="7.6" width="33.4" height="1.8" fill="#1a73e8" opacity="0.17"/><rect x="61.2" y="7.6" width="22.6" height="1.8" fill="#1a73e8" opacity="0.20"/><rect x="83.8" y="7.6" width="25.9" height="1.8" fill="#1a73e8" opacity="0.17"/><rect x="109.7" y="7.6" width="40.5" height="1.8" fill="#1a73e8" opacity="0.30"/><rect x="150.1" y="7.6" width="1.9" height="1.8" fill="#1a73e8" opacity="0.22"/><rect x="12.0" y="10.5" width="17.6" height="1.8" fill="#1a73e8" opacity="0.41"/><rect x="29.6" y="10.5" width="25.3" height="1.8" fill="#1a73e8" opacity="0.47"/><rect x="54.9" y="10.5" width="39.9" height="1.8" fill="#1a73e8" opacity="0.44"/><rect x="94.7" y="10.5" width="15.7" height="1.8" fill="#1a73e8" opacity="0.73"/><rect x="110.4" y="10.5" width="30.8" height="1.8" fill="#1a73e8" opacity="0.43"/><rect x="141.3" y="10.5" width="10.7" height="1.8" fill="#1a73e8" opacity="0.39"/></g></svg>
<svg class="b" style="left:154px;top:455px" width="115" height="19" viewBox="0 0 115 19"><defs><filter id="bl166459" x="-20%" y="-50%" width="140%" height="200%"><feGaussianBlur stdDeviation="3.5 0.7"/></filter></defs><g filter="url(#bl166459)"><rect x="12" y="5.1" width="91" height="8.8" fill="#9dc0f4" opacity=".9"/><rect x="12.0" y="4.9" width="30.8" height="1.8" fill="#1a73e8" opacity="0.74"/><rect x="42.8" y="4.9" width="40.9" height="1.8" fill="#1a73e8" opacity="0.64"/><rect x="83.7" y="4.9" width="19.3" height="1.8" fill="#1a73e8" opacity="0.51"/><rect x="12.0" y="8.6" width="20.0" height="1.8" fill="#1a73e8" opacity="0.27"/><rect x="32.0" y="8.6" width="31.0" height="1.8" fill="#1a73e8" opacity="0.27"/><rect x="63.0" y="8.6" width="24.9" height="1.8" fill="#1a73e8" opacity="0.18"/><rect x="87.9" y="8.6" width="15.1" height="1.8" fill="#1a73e8" opacity="0.30"/><rect x="12.0" y="12.1" width="40.6" height="1.8" fill="#1a73e8" opacity="0.68"/><rect x="52.6" y="12.1" width="39.5" height="1.8" fill="#1a73e8" opacity="0.65"/><rect x="92.1" y="12.1" width="10.9" height="1.8" fill="#1a73e8" opacity="0.57"/></g></svg>
<svg class="b" style="left:151px;top:509px" width="174" height="18" viewBox="0 0 174 18"><defs><filter id="bl163513" x="-20%" y="-50%" width="140%" height="200%"><feGaussianBlur stdDeviation="3.5 0.7"/></filter></defs><g filter="url(#bl163513)"><rect x="12" y="5.0" width="150" height="8.0" fill="#9dc0f4" opacity=".9"/><rect x="12.0" y="4.7" width="25.7" height="1.8" fill="#1a73e8" opacity="0.39"/><rect x="37.7" y="4.7" width="15.8" height="1.8" fill="#1a73e8" opacity="0.48"/><rect x="53.5" y="4.7" width="22.8" height="1.8" fill="#1a73e8" opacity="0.63"/><rect x="76.3" y="4.7" width="43.7" height="1.8" fill="#1a73e8" opacity="0.54"/><rect x="120.0" y="4.7" width="42.0" height="1.8" fill="#1a73e8" opacity="0.75"/><rect x="12.0" y="8.1" width="43.7" height="1.8" fill="#1a73e8" opacity="0.20"/><rect x="55.7" y="8.1" width="21.6" height="1.8" fill="#1a73e8" opacity="0.18"/><rect x="77.3" y="8.1" width="20.9" height="1.8" fill="#1a73e8" opacity="0.18"/><rect x="98.2" y="8.1" width="33.7" height="1.8" fill="#1a73e8" opacity="0.29"/><rect x="131.9" y="8.1" width="30.1" height="1.8" fill="#1a73e8" opacity="0.22"/><rect x="12.0" y="11.3" width="34.6" height="1.8" fill="#1a73e8" opacity="0.67"/><rect x="46.6" y="11.3" width="17.5" height="1.8" fill="#1a73e8" opacity="0.62"/><rect x="64.1" y="11.3" width="42.3" height="1.8" fill="#1a73e8" opacity="0.67"/><rect x="106.4" y="11.3" width="37.5" height="1.8" fill="#1a73e8" opacity="0.55"/><rect x="143.9" y="11.3" width="18.1" height="1.8" fill="#1a73e8" opacity="0.67"/></g></svg>
<div class="t" style="left:126.40px;top:563.48px;font-size:13.25px;color:#3c4043;font-weight:400;">Total: todas as campanhas ativadas na sua visu…</div>
<svg class="b" style="left:434px;top:561px" width="16" height="16" viewBox="0 0 16 16"><circle cx="8" cy="8" r="6.8" fill="none" stroke="#64676b" stroke-width="1.6"/><path d="M5.9 6.3 Q5.9 4.2 8 4.2 Q10.1 4.2 10.1 6.1 Q10.1 7.2 8.9 7.9 Q8 8.5 8 9.6" fill="none" stroke="#5f6368" stroke-width="1.4"/><circle cx="8" cy="11.6" r=".9" fill="#5f6368"/></svg>
<svg class="b" style="left:74px;top:595px" width="22" height="16" viewBox="0 0 22 16"><path d="M3 3.5 L11 11.5 L19 3.5" fill="none" stroke="#474b50" stroke-width="2.1"/></svg>
<div class="t" style="left:126.40px;top:596.99px;font-size:13.6px;color:#3c4043;font-weight:400;">Total: conta</div>
<svg class="b" style="left:207px;top:595.5px" width="16" height="16" viewBox="0 0 16 16"><circle cx="8" cy="8" r="6.8" fill="none" stroke="#64676b" stroke-width="1.6"/><path d="M5.9 6.3 Q5.9 4.2 8 4.2 Q10.1 4.2 10.1 6.1 Q10.1 7.2 8.9 7.9 Q8 8.5 8 9.6" fill="none" stroke="#5f6368" stroke-width="1.4"/><circle cx="8" cy="11.6" r=".9" fill="#5f6368"/></svg>
<div class="b" style="left:785px;top:623px;width:696px;height:11px;background:#bdc1c6"></div>
<div class="t" style="left:1405.20px;top:653.90px;font-size:14.3px;color:#3c4043;font-weight:400;">1 - 4 de 4</div>
<div class="b" style="left:13px;top:125.5px;width:45px;height:45px;background:#1a73e8;border-radius:50%;box-shadow:0 1px 3px rgba(60,64,67,.3),0 4px 8px 3px rgba(60,64,67,.15)"></div>
<svg class="b" style="left:25.2px;top:138.2px" width="20" height="20" viewBox="0 0 20 20"><path d="M10 0.6 V19.6 M0.6 10 H19.6" stroke="#fff" stroke-width="3.2"/></svg>
</body></html>
